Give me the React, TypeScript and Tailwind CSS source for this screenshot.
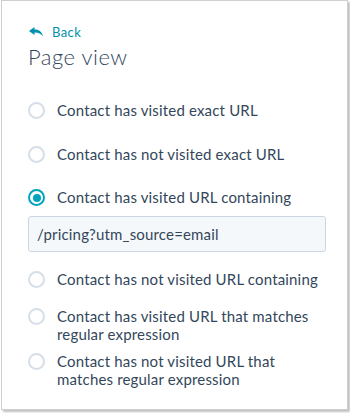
import React from "react";

function Radio({ checked }: { checked?: boolean }) {
  return checked ? (
    <span className="mt-[1px] flex h-[17px] w-[17px] shrink-0 items-center justify-center rounded-full border-2 border-[#00a4bd] bg-white">
      <span className="h-[8px] w-[8px] rounded-full bg-[#00a4bd]" />
    </span>
  ) : (
    <span className="mt-[1px] h-[17px] w-[17px] shrink-0 rounded-full border-2 border-[#d6dee8] bg-white" />
  );
}

function Row({ label, checked, className }: { label: string; checked?: boolean; className?: string }) {
  return (
    <div className={"flex items-start gap-[12px] " + (className ?? "")}>
      <Radio checked={checked} />
      <span className="text-[15px] leading-[18px] tracking-[0.17px] text-[#33475b] w-[264px]">{label}</span>
    </div>
  );
}

export default function App() {
  return (
    <div className="w-[350px] h-[413px] bg-white pl-[1px]" style={{ fontFamily: "Lato, 'Open Sans', sans-serif" }}>
      <div className="h-[410px] w-[347px] border border-[#cfcfcf] bg-white shadow-[2px_2px_2px_rgba(0,0,0,0.25)] px-[26px] pt-[23px]">
        <div className="flex items-center gap-[9px] text-[#0091ae]">
          <svg width="14" height="10" viewBox="0 0 14 10" className="mt-[-1px] ml-[1px]">
            <path d="M0 4 L5.5 0 L5.5 2.4 C9.5 2.4 13 4.2 14 9.5 C12.3 6.8 9.6 5.6 5.5 5.6 L5.5 8 Z" fill="#0091ae" />
          </svg>
          <span className="text-[13px] leading-[16px] tracking-[0.4px]">Back</span>
        </div>
        <h1 className="mt-[3px] text-[22px] leading-[28px] font-light text-[#33475b] tracking-[0.5px]">Page view</h1>
        <div className="mt-[30px] flex flex-col">
          <Row label="Contact has visited exact URL" />
          <Row label="Contact has not visited exact URL" className="mt-[26px]" />
          <Row label="Contact has visited URL containing" checked className="mt-[25px]" />
          <div className="mt-[10px] flex h-[36px] w-[298px] items-center rounded-[3px] border border-[#cbd6e2] bg-[#f5f8fa] px-[8px] text-[15px] tracking-[0.17px] text-[#33475b]">
            /pricing?utm_source=email
          </div>
          <Row label="Contact has not visited URL containing" className="mt-[18px]" />
          <Row label="Contact has visited URL that matches regular expression" className="mt-[19px]" />
          <Row label="Contact has not visited URL that matches regular expression" className="mt-[9px]" />
        </div>
      </div>
    </div>
  );
}
